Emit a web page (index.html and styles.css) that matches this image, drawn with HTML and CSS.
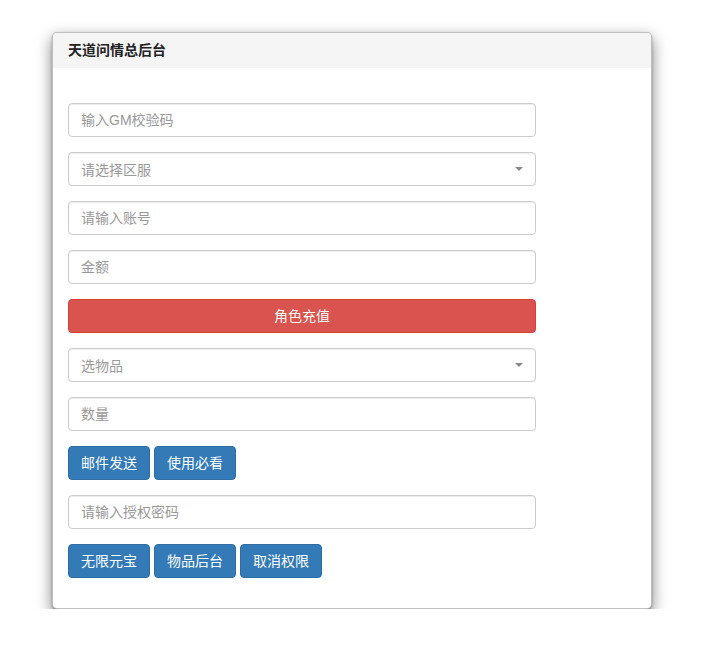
FILE: index.html
```html
<!DOCTYPE html>
<html>
<head>
<meta charset="utf-8">
<link rel="stylesheet" href="styles.css">
</head>
<body>
<div class="panel">
  <div class="panel-heading">天道问情总后台</div>
  <div class="panel-body">
    <input class="form-control" placeholder="输入GM校验码">
    <div class="form-control select"><span class="ph">请选择区服</span><span class="caret"></span></div>
    <input class="form-control" placeholder="请输入账号">
    <input class="form-control" placeholder="金额">
    <button class="btn btn-danger btn-block">角色充值</button>
    <div class="form-control select"><span class="ph">选物品</span><span class="caret"></span></div>
    <input class="form-control" placeholder="数量">
    <div class="btn-row">
      <button class="btn btn-primary">邮件发送</button>
      <button class="btn btn-primary">使用必看</button>
    </div>
    <input class="form-control" placeholder="请输入授权密码">
    <div class="btn-row">
      <button class="btn btn-primary">无限元宝</button>
      <button class="btn btn-primary">物品后台</button>
      <button class="btn btn-primary">取消权限</button>
    </div>
  </div>
</div>
</body>
</html>
```

FILE: styles.css
```css
* { box-sizing: border-box; }
html, body { margin: 0; padding: 0; background: #fff; }
body {
  font-family: "Liberation Sans", "Noto Sans CJK SC", sans-serif;
  font-size: 14px;
  color: #333;
  padding: 32px 0 0 52px;
}
.panel {
  width: 600px;
  background: #fff;
  border: 1px solid rgba(0,0,0,.25);
  border-radius: 5px;
  box-shadow: 0 1px 2px rgba(0,0,0,.35), 0 6px 15px rgba(0,0,0,.5);
}
.panel-heading {
  height: 35px;
  line-height: 35px;
  padding: 0 15px;
  background: #f5f5f5;
  font-weight: bold;
  font-size: 14px;
  color: #222;
  border-radius: 4px 4px 0 0;
}
.panel-body {
  padding: 35px 15px 30px;
  display: flex;
  flex-direction: column;
  gap: 15px;
}
.form-control {
  display: flex;
  align-items: center;
  width: 468px;
  height: 34px;
  padding: 6px 12px;
  font-family: inherit;
  font-size: 14px;
  color: #555;
  background: #fff;
  border: 1px solid #ccc;
  border-radius: 4px;
  box-shadow: inset 0 1px 1px rgba(0,0,0,.075);
  outline: none;
  margin: 0;
}
.form-control::placeholder { color: #999; }
.select { justify-content: space-between; }
.ph { color: #999; }
.caret {
  width: 0; height: 0;
  border-left: 4px solid transparent;
  border-right: 4px solid transparent;
  border-top: 4px solid #888;
  margin-right: 0;
}
.btn {
  height: 34px;
  padding: 6px 12px;
  font-family: inherit;
  font-size: 14px;
  line-height: 20px;
  border: 1px solid transparent;
  border-radius: 4px;
  color: #fff;
  margin: 0;
  cursor: pointer;
}
.btn-block { width: 468px; }
.btn-danger { background: #d9534f; border-color: #d43f3a; }
.btn-primary { background: #337ab7; border-color: #2e6da4; }
.btn-row { display: flex; gap: 4px; }
```
